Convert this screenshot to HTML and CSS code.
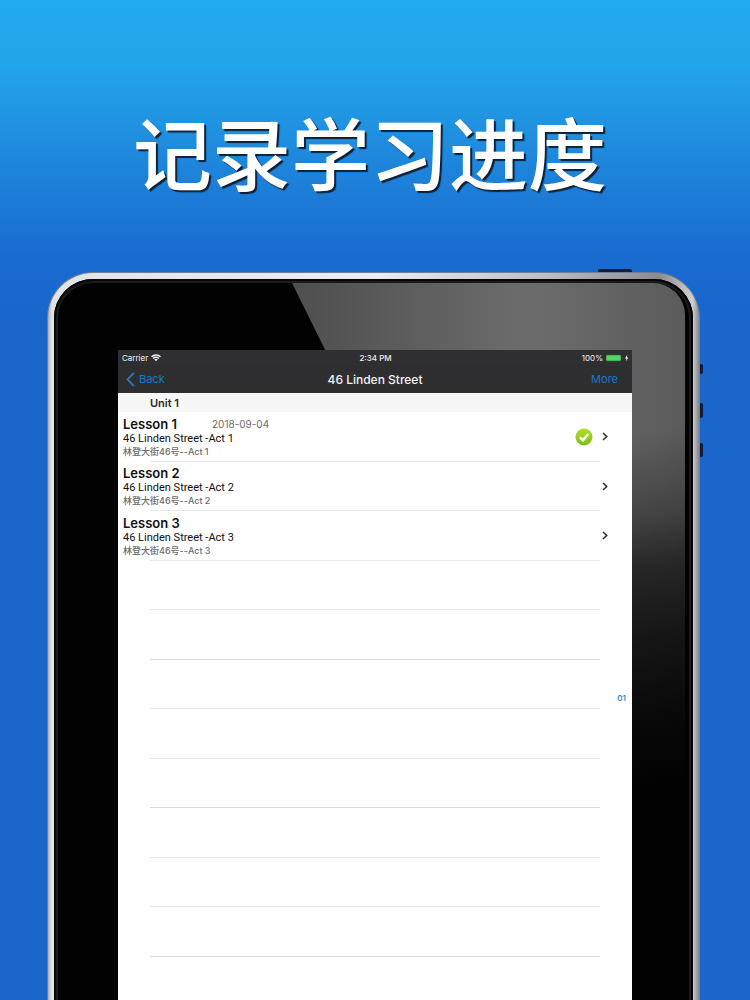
FILE: index.html
```html
<!DOCTYPE html>
<html lang="zh-CN">
<head>
<meta charset="utf-8">
<meta name="viewport" content="width=device-width, initial-scale=1">
<title>记录学习进度</title>
<link rel="stylesheet" href="styles.css">
</head>
<body>
<main class="poster">
  <h1 class="headline">记录学习进度</h1>
  <div class="device">
    <span class="key key-power"></span>
    <span class="key key-mute"></span>
    <span class="key key-up"></span>
    <span class="key key-down"></span>
    <div class="bezel">
      <div class="glare"></div>
      <section class="screen">
        <div class="status">
          <span class="carrier">Carrier
            <svg width="10" height="8" viewBox="0 0 20 15" fill="#f2f2f2"><path d="M10 0C6.200 0 2.700 1.500 0 4l2.100 2.100A11.300 11.300 0 0 1 10 3c3 0 5.800 1.200 7.900 3.100L20 4C17.300 1.500 13.800 0 10 0z"/><path d="M10 4.700c-2.600 0-5 1-6.700 2.700l2.100 2.100A6.600 6.600 0 0 1 10 7.600c1.800 0 3.400.7 4.600 1.900l2.100-2.100A9.600 9.600 0 0 0 10 4.700z"/><path d="M10 9.200c-1.300 0-2.500.5-3.400 1.400L10 14l3.400-3.400A4.800 4.800 0 0 0 10 9.200z"/></svg>
          </span>
          <span class="clock">2:34 PM</span>
          <span class="power">100%
            <svg width="24" height="8" viewBox="0 0 24 8"><rect x="1" y="1" width="15" height="6" rx="1" fill="#4fd964" stroke="#35583b" stroke-width=".6"/><path d="M17.300 3v2q.9-1 0-2z" fill="#8aa08d"/><path d="M22.300 .7 20 4.400h1.500L21 7.300l2.300-3.800h-1.500z" fill="#fff"/></svg>
          </span>
        </div>
        <header class="nav">
          <button class="nav-btn" type="button">
            <svg width="9" height="15" viewBox="0 0 9 15" fill="none" stroke="#1679c9" stroke-width="1.800"><path d="M7.800 1 1.500 7.500l6.300 6.500"/></svg>
            Back
          </button>
          <h2 class="nav-title">46 Linden Street</h2>
          <button class="nav-btn nav-more" type="button">More</button>
        </header>
        <h3 class="unit">Unit 1</h3>
        <ul class="lessons">
          <li class="row">
            <div class="info">
              <div class="top"><strong class="name">Lesson 1</strong><time class="date">2018-09-04</time></div>
              <div class="en">46 Linden Street -Act 1</div>
              <div class="zh">林登大街46号--Act 1</div>
            </div>
            <svg width="18" height="18" viewBox="0 0 18 18"><defs><linearGradient id="lime" x1="0" y1="0" x2="0" y2="1"><stop offset="0" stop-color="#b4e02a"/><stop offset="1" stop-color="#7dbb12"/></linearGradient></defs><circle cx="9" cy="9" r="8.500" fill="url(#lime)"/><path d="m4.900 9.300 3 3 5.300-6.300" fill="none" stroke="#fff" stroke-width="2.600"/></svg>
            <svg class="chev" width="6" height="9" viewBox="0 0 6 9"><path d="m1 1 3.700 3.500L1 8"/></svg>
          </li>
          <li class="row">
            <div class="info">
              <div class="top"><strong class="name">Lesson 2</strong></div>
              <div class="en">46 Linden Street -Act 2</div>
              <div class="zh">林登大街46号--Act 2</div>
            </div>
            <svg class="chev" width="6" height="9" viewBox="0 0 6 9"><path d="m1 1 3.700 3.500L1 8"/></svg>
          </li>
          <li class="row">
            <div class="info">
              <div class="top"><strong class="name">Lesson 3</strong></div>
              <div class="en">46 Linden Street -Act 3</div>
              <div class="zh">林登大街46号--Act 3</div>
            </div>
            <svg class="chev" width="6" height="9" viewBox="0 0 6 9"><path d="m1 1 3.700 3.500L1 8"/></svg>
          </li>
          <li class="row"></li>
          <li class="row strong"></li>
          <li class="row"></li>
          <li class="row"></li>
          <li class="row strong"></li>
          <li class="row"></li>
          <li class="row"></li>
          <li class="row strong"></li>
        </ul>
        <a class="index" href="#">01</a>
      </section>
    </div>
  </div>
</main>
</body>
</html>
```

FILE: styles.css
```css
* { box-sizing: border-box; }

body {
  margin: 0;
  font-family: Inter, "Liberation Sans", "Noto Sans CJK SC", sans-serif;
}

h1, h2, h3, ul { margin: 0; padding: 0; }

.poster {
  display: flex;
  flex-direction: column;
  height: 100vh;
  overflow: hidden;
  background: linear-gradient(#22aaee 0, #22a6ea 60px, #2092e1 125px, #1c7ad6 200px, #1969ce 270px, #1a66cb 340px);
}

.headline {
  padding: 93px 10px 63px 0;
  text-align: center;
  font: 500 79px/116px "Noto Sans CJK SC", sans-serif;
  color: #fff;
  text-shadow: 2px 2px 1px #0d2138;
}

.device {
  position: relative;
  flex: 1;
  display: flex;
  margin: 0 50px -10px 47px;
  padding: 6px 6px 0 6px;
  border: 1px solid #6f7f95;
  border-bottom: 0;
  border-radius: 46px 46px 0 0;
  background: linear-gradient(90deg, #a9adb3 0, #e2e3e5 4px, #eceef0 50%, #c2c2c4 75%, #8b8b8d 94%, #d0d0d4 99%, #85878c 100%);
}

.bezel {
  position: relative;
  flex: 1;
  display: flex;
  padding: 71px 61px 0 64px;
  border-radius: 39px 39px 0 0;
  background: #020203;
  box-shadow: inset 0 0 0 2px #060606, inset 0 0 0 4px #1b1b1c;
  overflow: hidden;
}

.glare {
  position: absolute;
  inset: 4px 8px 0 0;
  border-radius: 0 32px 0 0;
  clip-path: polygon(238px 0, 100% 0, 100% 100%, 598px 100%);
  background:
    linear-gradient(172deg, transparent 0, transparent 230px, rgba(28, 28, 28, .4) 310px, #262626 365px, #161616 430px, #09090a 510px, #020203 580px),
    linear-gradient(90deg, #505050 40%, #6c6c6c 75%, #5b5b5b 100%);
}

.key { position: absolute; width: 3px; background: #111e36; border-radius: 0 2px 2px 0; }
.key-power { top: -4px; right: 67px; width: 34px; height: 3px; border-radius: 2px 2px 0 0; }
.key-mute { top: 91px; right: -4px; height: 10px; }
.key-up { top: 130px; right: -4px; height: 15px; }
.key-down { top: 170px; right: -4px; height: 14px; }

.screen {
  position: relative;
  flex: 1;
  background: #fff;
  color: #111;
}

.status {
  display: grid;
  grid-template-columns: 1fr auto 1fr;
  align-items: center;
  height: 15px;
  padding: 0 3px 0 4px;
  background: #2f2f31;
  color: #f2f2f2;
  font-size: 8px;
}

.clock { font-weight: 500; }
.carrier, .power { display: flex; align-items: center; gap: 3px; }
.power { justify-content: flex-end; gap: 2px; }

.nav {
  display: grid;
  grid-template-columns: 1fr auto 1fr;
  align-items: center;
  height: 28px;
  padding: 0 8px;
  background: #2e2e30;
}

.nav-title { font-size: 12px; font-weight: 500; color: #f2f2f2; }

.nav-btn {
  display: flex;
  align-items: center;
  gap: 4px;
  padding: 0;
  border: 0;
  background: none;
  color: #1679c9;
  font: 400 11px/16px Inter, sans-serif;
}
.nav-more { justify-self: end; padding-right: 6px; }

.unit {
  padding-left: 32px;
  background: #f7f7f8;
  color: #2a2a2c;
  font-size: 11px;
  font-weight: 600;
  line-height: 20px;
  height: 19px;
}

.lessons { list-style: none; }

.row {
  display: flex;
  align-items: center;
  gap: 9px;
  height: 49px;
  padding: 3px 24px 4px 5px;
  background: linear-gradient(#e9eaed, #e9eaed) 32px 100% / calc(100% - 64px) 1px no-repeat;
}
.row:nth-child(odd) { height: 50px; }
.strong { background-image: linear-gradient(#d9dade, #d9dade); }

.info { flex: 1; }
.top { display: flex; align-items: center; gap: 35px; }
.name { font-size: 13px; font-weight: 600; line-height: 16px; }
.date { font-size: 10px; line-height: 16px; color: #6b6b6e; }
.en { font-family: Roboto, sans-serif; font-size: 11px; line-height: 14px; }
.zh { font-size: 9px; font-weight: 500; line-height: 12px; color: #6b6b6e; }

.chev { fill: none; stroke: #333; stroke-width: 1.6; }

.index {
  position: absolute;
  top: 342px;
  right: 6px;
  font-size: 8px;
  font-weight: 600;
  line-height: 12px;
  color: #2d8fd8;
  text-decoration: none;
}
```
